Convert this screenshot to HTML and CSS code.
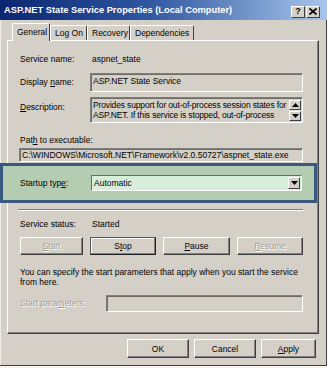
FILE: index.html
```html
<!DOCTYPE html>
<html lang="en">
<head>
  <meta charset="UTF-8">
  <title>ASP.NET State Service Properties (Local Computer)</title>
  <link rel="stylesheet" href="styles.css">
</head>
<body>
  <div class="window">
    <!-- Title bar -->
    <div class="titlebar">
      <span class="title">ASP.NET State Service Properties (Local Computer)</span>
      <div class="caption-btns">
        <span class="cbtn help">?</span>
        <span class="cbtn">
          <svg width="8" height="7" viewBox="0 0 8 7"><path d="M0.5 0.5 L7.5 6.5 M7.5 0.5 L0.5 6.5" stroke="#000" stroke-width="1.6"/></svg>
        </span>
      </div>
    </div>

    <!-- Tabs -->
    <div class="tabs">
      <div class="tab active">General</div>
      <div class="tab">Log On</div>
      <div class="tab">Recovery</div>
      <div class="tab">Dependencies</div>
    </div>

    <!-- General page -->
    <div class="panel">
      <div class="row">
        <span class="label">Service name:</span>
        <span class="value">aspnet_state</span>
      </div>

      <div class="row display-row">
        <span class="label">Display <u>n</u>ame:</span>
        <div class="field display">ASP.NET State Service</div>
      </div>

      <div class="row desc-row">
        <span class="label"><u>D</u>escription:</span>
        <div class="field memo">
          <div class="memo-text">Provides support for out-of-process session states for<br>ASP.NET. If this service is stopped, out-of-process</div>
          <div class="vscroll">
            <span class="sbtn"><svg width="7" height="4" viewBox="0 0 7 4"><path d="M3.5 0 L7 4 L0 4 Z" fill="#000"/></svg></span>
            <span class="sbtn"><svg width="7" height="4" viewBox="0 0 7 4"><path d="M0 0 L7 0 L3.5 4 Z" fill="#000"/></svg></span>
          </div>
        </div>
      </div>

      <div class="path-label">Pat<u>h</u> to executable:</div>
      <div class="field path">C:\WINDOWS\Microsoft.NET\Framework\v2.0.50727\aspnet_state.exe</div>

      <!-- highlighted startup type -->
      <div class="highlight">
        <span class="label">Startup typ<u>e</u>:</span>
        <div class="combo">
          <span class="combo-text">Automatic</span>
          <span class="drop"><svg width="7" height="4" viewBox="0 0 7 4"><path d="M0 0 L7 0 L3.5 4 Z" fill="#000"/></svg></span>
        </div>
      </div>

      <div class="sep"></div>

      <div class="row status-row">
        <span class="label">Service status:</span>
        <span class="value">Started</span>
      </div>

      <div class="svc-btns">
        <div class="btn disabled"><u>S</u>tart</div>
        <div class="btn focused">S<u>t</u>op</div>
        <div class="btn"><u>P</u>ause</div>
        <div class="btn disabled"><u>R</u>esume</div>
      </div>

      <p class="hint">You can specify the start parameters that apply when you start the service<br>from here.</p>

      <div class="row params-row">
        <span class="label disabled">Start para<u>m</u>eters:</span>
        <div class="field params"></div>
      </div>
    </div>

    <!-- Dialog buttons -->
    <div class="footer">
      <div class="btn ok">OK</div>
      <div class="btn cancel">Cancel</div>
      <div class="btn apply"><u>A</u>pply</div>
    </div>
  </div>
</body>
</html>
```

FILE: styles.css
```css
* {
  box-sizing: border-box;
}

body {
  margin: 0;
  background: #f4f4f2;
  font-family: "Liberation Sans", Arial, sans-serif;
  font-size: 8.5px;
  color: #000;
}

.window {
  width: 327px;
  height: 366px;
  background: #d4d0c8;
  box-shadow: inset -1px -1px #404040, inset 1px 0 #f0eee9;
}

/* title bar */
.titlebar {
  height: 20px;
  display: flex;
  justify-content: space-between;
  align-items: center;
  padding: 0 7px 0 4px;
  background: linear-gradient(90deg, #0b2670 0%, #2f56a0 45%, #a8c6ec 100%);
}

.title {
  color: #fff;
  font-weight: bold;
  font-size: 9.3px;
  white-space: nowrap;
}

.caption-btns {
  display: flex;
  gap: 1px;
  padding-top: 3px;
}

.cbtn {
  width: 14px;
  height: 12px;
  background: #d4d0c8;
  border: 1px solid;
  border-color: #fff #404040 #404040 #fff;
  display: flex;
  align-items: center;
  justify-content: center;
  font-weight: bold;
  font-size: 9px;
  line-height: 1;
}

/* tabs */
.tabs {
  display: flex;
  align-items: flex-end;
  height: 17px;
  margin-top: 3px;
  padding-left: 12px;
}

.tab {
  height: 15px;
  line-height: 14px;
  padding-left: 4px;
  border-top: 1px solid #fff;
  border-left: 1px solid #fff;
  border-right: 1px solid #404040;
  border-radius: 2px 2px 0 0;
  white-space: nowrap;
}

.tab:nth-child(1) { width: 38px; }
.tab:nth-child(2) { width: 37px; }
.tab:nth-child(3) { width: 43px; }
.tab:nth-child(4) { width: 64px; }

.tab.active {
  height: 18px;
  margin-bottom: -1px;
  line-height: 16px;
  background: #d4d0c8;
  position: relative;
  z-index: 1;
}

/* tab page */
.panel {
  width: 312px;
  height: 294px;
  margin-left: 7px;
  padding: 13px 15px 0 12px;
  border: 1px solid;
  border-color: #fff #404040 #404040 #fff;
  box-shadow: inset -1px -1px #808080;
}

.row {
  display: flex;
  align-items: center;
  line-height: 11px;
}

.label {
  width: 70px;
  flex: none;
  white-space: nowrap;
}

.value {
  padding-left: 2px;
}

.disabled {
  color: #a19d95;
  text-shadow: 1px 1px #fff;
}

.field {
  flex: 1;
  border: 1px solid;
  border-color: #808080 #fff #fff #808080;
  box-shadow: inset 1px 1px #6e6b64;
  white-space: nowrap;
  overflow: hidden;
}

.display-row {
  margin-top: 8px;
}

.field.display {
  height: 19px;
  padding: 2px 2px 0;
}

.desc-row {
  margin-top: 5px;
  align-items: flex-start;
}

.desc-row .label {
  padding-top: 5px;
}

.field.memo {
  height: 26px;
  display: flex;
  padding: 2px 1px 1px 2px;
}

.memo-text {
  flex: 1;
  line-height: 10px;
  letter-spacing: -0.15px;
  overflow: hidden;
}

.vscroll {
  width: 12px;
  flex: none;
  display: flex;
  flex-direction: column;
  justify-content: space-between;
  background: #e6e4de;
}

.sbtn,
.drop {
  width: 12px;
  height: 10px;
  background: #d4d0c8;
  border: 1px solid;
  border-color: #fff #404040 #404040 #fff;
  display: flex;
  align-items: center;
  justify-content: center;
}

.path-label {
  margin-top: 12px;
  line-height: 11px;
}

.field.path {
  height: 14px;
  margin: 2px 0 0 -1px;
  padding: 1px 2px 0;
  line-height: 11px;
}

/* annotation box around startup type */
.highlight {
  height: 40px;
  margin: 1px -14px 0 -20px;
  padding: 0 12px 0 17px;
  border: 3px solid #38587e;
  background: #b4ccb2;
  display: flex;
  align-items: center;
}

.highlight .label {
  width: 71px;
}

.combo {
  flex: 1;
  height: 16px;
  display: flex;
  align-items: center;
  justify-content: space-between;
  padding: 0 1px 0 2px;
  background: #d8eedd;
  border: 1px solid;
  border-color: #6e6b64 #fff #fff #6e6b64;
}

.drop {
  height: 12px;
}

.sep {
  height: 2px;
  margin: 6px 0 0 -2px;
  border-top: 1px solid #808080;
  border-bottom: 1px solid #fff;
}

.status-row {
  margin-top: 8px;
}

.svc-btns {
  display: flex;
  justify-content: space-between;
  margin-top: 7px;
}

.btn {
  height: 18px;
  display: flex;
  align-items: center;
  justify-content: center;
  background: #d4d0c8;
  border: 1px solid;
  border-color: #fff #404040 #404040 #fff;
  box-shadow: inset -1px -1px #808080;
}

.svc-btns .btn:nth-child(1) { width: 63px; }
.svc-btns .btn:nth-child(2) { width: 66px; }
.svc-btns .btn:nth-child(3) { width: 67px; }
.svc-btns .btn:nth-child(4) { width: 66px; }

.btn.focused {
  border-color: #5a5852 #202020 #202020 #5a5852;
  box-shadow: inset -1px -1px #808080, inset 1px 1px #fff;
}

.hint {
  margin: 12px 0 0;
  line-height: 10px;
}

.params-row {
  margin-top: 8px;
}

.params-row .label {
  width: 86px;
}

.field.params {
  height: 17px;
}

/* dialog buttons */
.footer {
  display: flex;
  justify-content: flex-end;
  gap: 5px;
  margin-top: 5px;
  padding-right: 11px;
}

.footer .btn {
  height: 19px;
  width: 62px;
}

.footer .btn.apply {
  width: 55px;
}
```
